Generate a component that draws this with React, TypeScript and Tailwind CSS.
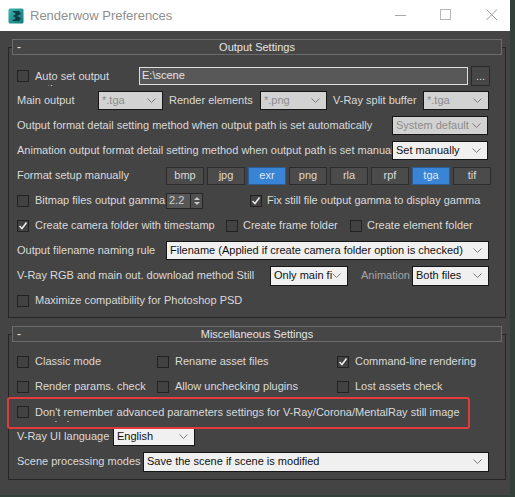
import React from "react";

const Chevron = () => (
  <svg width="9" height="5" viewBox="0 0 9 5" className="shrink-0">
    <polyline points="0.5,0.5 4.5,4.5 8.5,0.5" fill="none" stroke="#7a7a7a" strokeWidth="1" />
  </svg>
);

function Sel({ className, text, disabled }: { className: string; text: string; disabled?: boolean }) {
  return (
    <div
      className={
        "flex items-center justify-between pl-[3px] pr-[6px] border border-[#161616] shrink-0 overflow-hidden whitespace-nowrap " +
        (disabled ? "bg-[#d2d2d2] text-[#8c8c8c] " : "bg-[#f0f0f0] text-[#101010] ") +
        className
      }
    >
      <span className="overflow-hidden">{text}</span>
      <Chevron />
    </div>
  );
}

function Check({ checked, className = "" }: { checked?: boolean; className?: string }) {
  return (
    <div className={"w-[12px] h-[12px] shrink-0 border border-[#222222] bg-[#424242] flex items-center justify-center " + className}>
      {checked && (
        <svg width="10" height="10" viewBox="0 0 10 10">
          <polyline points="1.5,5 4,7.5 8.5,1.5" fill="none" stroke="#e8e8e8" strokeWidth="1.6" />
        </svg>
      )}
    </div>
  );
}

const Row = ({ children }: { children: React.ReactNode }) => (
  <div className="h-[25px] flex items-center whitespace-nowrap">{children}</div>
);

function Header({ title }: { title: string }) {
  return (
    <div className="relative -mt-[9px] mx-[3px] h-[16px] border border-[#6c6c6c] bg-[#464646] flex items-center justify-center text-[#e4e4e4]">
      <span className="absolute left-[4px] top-[0px] text-[12px] leading-[14px]">-</span>
      <span>{title}</span>
    </div>
  );
}

export default function App() {
  const fmts = ["bmp", "jpg", "exr", "png", "rla", "rpf", "tga", "tif"];
  const blue = ["exr", "tga"];
  return (
    <div
      className="w-[515px] h-[497px] bg-[#33403a] relative overflow-hidden text-[11px] leading-[13px]"
      style={{ fontFamily: '"Liberation Sans", Arial, sans-serif' }}
    >
      <div className="w-[510px] h-[495px] bg-[#444444] flex flex-col">
        {/* Title bar */}
        <div className="h-[31px] bg-white flex items-center shrink-0 relative">
          <svg width="16" height="16" viewBox="0 0 16 16" className="ml-[8px]">
            <defs>
              <linearGradient id="tg" x1="0" y1="0" x2="1" y2="1">
                <stop offset="0" stopColor="#3bb3b0" />
                <stop offset="1" stopColor="#137a7a" />
              </linearGradient>
            </defs>
            <rect x="0.5" y="0.5" width="15" height="15" rx="1.5" fill="url(#tg)" />
            <polygon points="4,3 11,3 13,6 9,8 13,10 11,13 4,13 8,10 5,8 8,6" fill="#0c3f44" />
          </svg>
          <span className="ml-[6px] text-[13px] text-[#8f8f8f]">Renderwow Preferences</span>
          <svg width="12" height="12" viewBox="0 0 12 12" className="absolute left-[395px] top-[10px]">
            <line x1="0" y1="5.5" x2="11" y2="5.5" stroke="#a8a8a8" strokeWidth="1" />
          </svg>
          <svg width="12" height="12" viewBox="0 0 12 12" className="absolute left-[440px] top-[9px]">
            <rect x="0.5" y="0.5" width="10" height="10" fill="none" stroke="#b8b8b8" strokeWidth="1" />
          </svg>
          <svg width="12" height="12" viewBox="0 0 12 12" className="absolute left-[486px] top-[9px]">
            <line x1="0.5" y1="0.5" x2="11" y2="11" stroke="#9a9a9a" strokeWidth="1" />
            <line x1="11" y1="0.5" x2="0.5" y2="11" stroke="#9a9a9a" strokeWidth="1" />
          </svg>
        </div>

        {/* Output settings */}
        <div className="ml-[8px] w-[498px] mt-[16px] border border-[#262626] pb-[4px] text-[#dadada]">
          <Header title="Output Settings" />
          <div className="mt-[8px] pl-[8px]">
            <Row>
              <Check />
              <div className="ml-[6px] w-[104px] self-start h-[23px] pt-[7px] overflow-hidden">
                <div className="w-[90px] whitespace-normal">Auto set output path</div>
              </div>
              <div className="w-[329px] h-[18px] bg-[#585858] border border-[#dedede] flex items-center pl-[2px] text-[#e6e6e6]">
                E:\scene
              </div>
              <div className="ml-[3px] w-[19px] h-[20px] bg-[#474747] border border-[#2a2a2a] flex items-center justify-center text-[#dcdcdc] leading-[10px]">
                ...
              </div>
            </Row>
            <Row>
              <div className="w-[81px]">Main output</div>
              <Sel className="w-[65px] h-[19px]" text="*.tga" disabled />
              <div className="ml-[6px] w-[91px]">Render elements</div>
              <Sel className="w-[67px] h-[19px]" text="*.png" disabled />
              <div className="ml-[6px] w-[90px]">V-Ray split buffer</div>
              <Sel className="w-[66px] h-[19px]" text="*.tga" disabled />
            </Row>
            <Row>
              <div className="w-[375px] overflow-hidden">Output format detail setting method when output path is set automatically</div>
              <Sel className="w-[96px] h-[19px]" text="System default" disabled />
            </Row>
            <Row>
              <div className="w-[375px] overflow-hidden">Animation output format detail setting method when output path is set manually</div>
              <Sel className="w-[96px] h-[19px]" text="Set manually" />
            </Row>
            <Row>
              <div className="w-[149px]">Format setup manually</div>
              <div className="flex gap-[3px]">
                {fmts.map((f) => (
                  <div
                    key={f}
                    className={
                      "w-[38px] h-[18px] flex items-center justify-center border " +
                      (blue.includes(f)
                        ? "bg-[#3a84d6] border-[#2a5d96] text-[#dbe9fb]"
                        : "bg-[#4b4b4b] border-[#2c2c2c] text-[#dadada]")
                    }
                  >
                    {f}
                  </div>
                ))}
              </div>
            </Row>
            <Row>
              <Check />
              <div className="ml-[6px] w-[131px]">Bitmap files output gamma</div>
              <div className="flex items-stretch h-[16px]">
                <div className="w-[25px] bg-[#575757] border border-[#262626] flex items-center pl-[2px] text-[#cfcfcf]">2.2</div>
                <div className="w-[12px] bg-[#505050] border border-l-0 border-[#262626] flex flex-col items-center justify-center gap-[2px]">
                  <svg width="6" height="3" viewBox="0 0 6 3"><polygon points="0,3 3,0 6,3" fill="#c8c8c8" /></svg>
                  <svg width="6" height="3" viewBox="0 0 6 3"><polygon points="0,0 6,0 3,3" fill="#c8c8c8" /></svg>
                </div>
              </div>
              <Check checked className="ml-[47px]" />
              <div className="ml-[5px]">Fix still file output gamma to display gamma</div>
            </Row>
            <Row>
              <Check checked />
              <div className="ml-[6px] w-[191px]">Create camera folder with timestamp</div>
              <Check />
              <div className="ml-[5px] w-[107px]">Create frame folder</div>
              <Check />
              <div className="ml-[5px]">Create element folder</div>
            </Row>
            <Row>
              <div className="w-[149px]">Output filename naming rule</div>
              <Sel className="w-[323px] h-[19px]" text="Filename (Applied if create camera folder option is checked)" />
            </Row>
            <Row>
              <div className="w-[253px]">V-Ray RGB and main out. download method Still</div>
              <Sel className="w-[78px] h-[20px]" text="Only main fi" />
              <div className="ml-[13px] w-[51px] text-[#a6a6a6]">Animation</div>
              <Sel className="w-[77px] h-[20px]" text="Both files" />
            </Row>
            <Row>
              <Check />
              <div className="ml-[6px]">Maximize compatibility for Photoshop PSD</div>
            </Row>
          </div>
        </div>

        {/* Miscellaneous settings */}
        <div className="ml-[8px] w-[498px] mt-[16px] border border-[#262626] pb-[5px] text-[#dadada]">
          <Header title="Miscellaneous Settings" />
          <div className="mt-[7px] pl-[8px]">
            <Row>
              <Check />
              <div className="ml-[6px] w-[122px]">Classic mode</div>
              <Check />
              <div className="ml-[6px] w-[162px]">Rename asset files</div>
              <Check checked />
              <div className="ml-[6px]">Command-line rendering</div>
            </Row>
            <Row>
              <Check />
              <div className="ml-[6px] w-[122px]">Render params. check</div>
              <Check />
              <div className="ml-[6px] w-[162px]">Allow unchecking plugins</div>
              <Check />
              <div className="ml-[6px]">Lost assets check</div>
            </Row>
            <Row>
              <Check />
              <div className="ml-[6px] self-start h-[23px] pt-[7px] overflow-hidden">
                <div className="w-[425px] whitespace-normal">
                  Don't remember advanced parameters settings for V-Ray/Corona/MentalRay still image rendering
                </div>
              </div>
            </Row>
            <Row>
              <div className="w-[96px]">V-Ray UI language</div>
              <Sel className="w-[82px] h-[19px]" text="English" />
            </Row>
            <Row>
              <div className="w-[126px]">Scene processing modes</div>
              <Sel className="w-[346px] h-[20px]" text="Save the scene if scene is modified" />
            </Row>
          </div>
        </div>
      </div>

      {/* red annotation box */}
      <div className="absolute left-[7px] top-[397px] w-[463px] h-[32px] border-2 border-[#e23b3b] rounded-[3px]" />
    </div>
  );
}
